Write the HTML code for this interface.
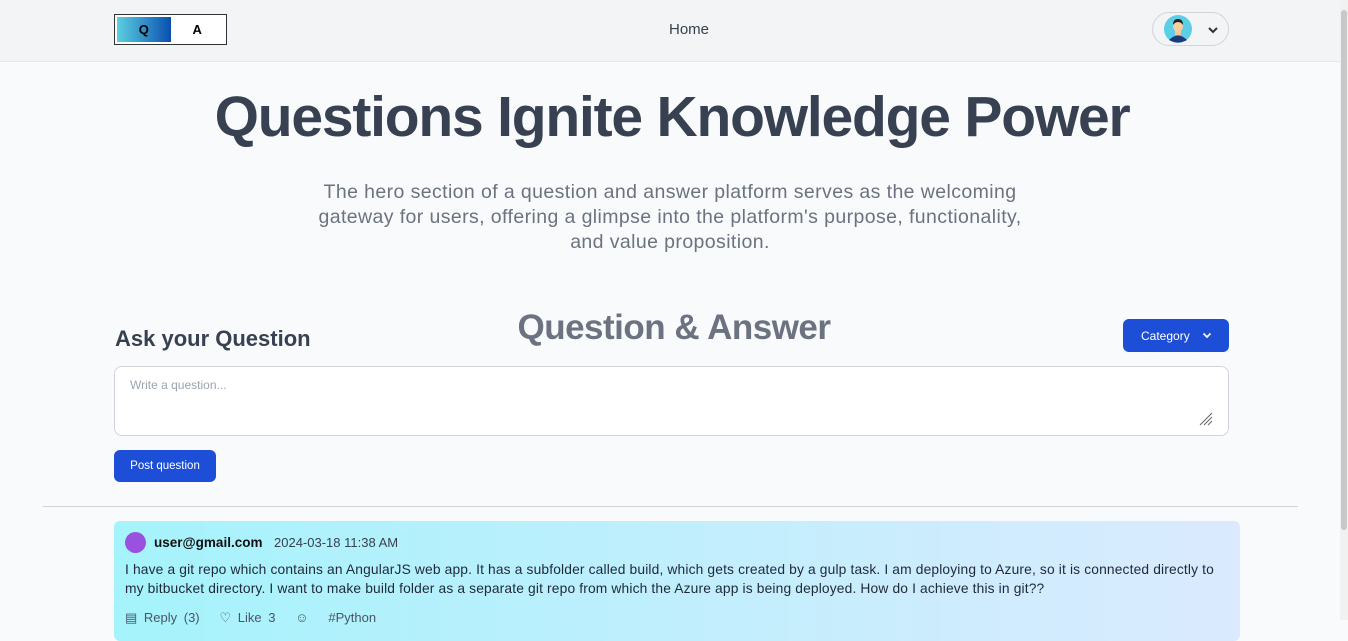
<!DOCTYPE html>
<html><head><meta charset="utf-8"><style>
*{box-sizing:border-box;margin:0;padding:0}
body{width:1348px;height:620px;overflow:hidden;background:#f9fafb;font-family:"Liberation Sans",sans-serif;color:#374151;position:relative}
.hdr{position:absolute;left:0;top:0;width:1340px;height:62px;background:#f3f4f6;border-bottom:1px solid #e5e7eb}
.logo{position:absolute;left:114px;top:14px;width:113px;height:31px;border:1.5px solid #333;background:#fff;display:flex;padding:2px}
.logo div{width:54px;height:100%;display:flex;align-items:center;justify-content:center;font-weight:bold;font-size:13px;color:#000}
.logo .q{background:linear-gradient(90deg,#5bd0e0,#0a4fb0)}
.home{position:absolute;left:669px;top:21px;font-size:15px;color:#374151}
.usr{position:absolute;left:1152px;top:12px;width:77px;height:34px;border:1px solid #d1d5db;border-radius:17px}
.sb{position:absolute;right:0;top:0;width:8px;height:620px;background:#f1f1f1}
.sb div{position:absolute;left:1px;top:10px;width:6px;height:520px;background:#c8c8c8;border-radius:3px}
h1{position:absolute;left:2px;width:1340px;top:84px;text-align:center;font-size:57px;font-weight:bold;letter-spacing:-1.2px;color:#374151}
.sub{position:absolute;left:305px;width:730px;top:180px;text-align:center;font-size:19.5px;letter-spacing:0.4px;line-height:25px;color:#6b7280}
.ask{position:absolute;left:115px;top:326px;font-size:22px;font-weight:bold;color:#374151}
.qa{position:absolute;left:0;width:1348px;top:308px;text-align:center;font-size:35px;font-weight:bold;color:#6b7280;letter-spacing:-0.5px}
.cat{position:absolute;left:1123px;top:319px;width:106px;height:33px;background:#1d4ed8;border-radius:6px;color:#fff;font-size:12px;display:flex;align-items:center;padding-left:18px}
.ta{position:absolute;left:114px;top:366px;width:1115px;height:70px;background:#fff;border:1px solid #d1d5db;border-radius:8px}
.ta span{position:absolute;left:15px;top:11px;font-size:12px;color:#9ca3af}
.post{position:absolute;left:114px;top:450px;width:102px;height:32px;background:#1d4ed8;border-radius:6px;color:#fff;font-size:11.5px;display:flex;align-items:center;justify-content:center}
.hr{position:absolute;left:43px;top:506px;width:1255px;height:1px;background:#d1d5db}
.card{position:absolute;left:114px;top:521px;width:1126px;height:120px;border-radius:6px;background:linear-gradient(90deg,#a5f3fc,#dbeafe)}
.av{position:absolute;left:11px;top:11px;width:21px;height:21px;border-radius:50%;background:#9b51e0}
.em{position:absolute;left:40px;top:14px;font-size:13.5px;font-weight:bold;color:#111}
.dt{position:absolute;left:160px;top:14px;font-size:13px;color:#374151}
.txt{position:absolute;left:11px;top:40px;width:1110px;font-size:13.8px;letter-spacing:0.15px;line-height:18.5px;color:#1f2937;white-space:nowrap}
.act{position:absolute;left:11px;top:89px;font-size:13px;color:#4b5563;word-spacing:3px}
</style></head><body>
<div class="hdr">
<div class="logo"><div class="q">Q</div><div>A</div></div>
<div class="home">Home</div>
<div class="usr">
<svg width="30" height="30" viewBox="0 0 30 30" style="position:absolute;left:10px;top:1px"><circle cx="15" cy="15" r="14" fill="#5ccfe6"/><path d="M6 26 Q15 17 24 26 Q15 31 6 26Z" fill="#1f3a7a"/><rect x="12" y="15" width="6" height="6" fill="#f2c79a"/><ellipse cx="15" cy="12" rx="5" ry="6" fill="#f5cfa0"/><path d="M10 11 Q10 5 15 5 Q20 5 20 11 Q18 8 15 8 Q12 8 10 11Z" fill="#222"/></svg>
<svg width="12" height="8" viewBox="0 0 12 8" style="position:absolute;left:54px;top:13px"><path d="M2 2 L6 6 L10 2" stroke="#333" stroke-width="2" fill="none"/></svg>
</div>
</div>
<div class="sb"><div></div></div>
<h1>Questions Ignite Knowledge Power</h1>
<div class="sub">The hero section of a question and answer platform serves as the welcoming gateway for users, offering a glimpse into the platform's purpose, functionality,<br>and value proposition.</div>
<div class="qa">Question &amp; Answer</div>
<div class="ask">Ask your Question</div>
<div class="cat">Category<svg width="10" height="7" viewBox="0 0 10 7" style="margin-left:12px"><path d="M1.5 1.5 L5 5 L8.5 1.5" stroke="#fff" stroke-width="1.8" fill="none"/></svg></div>
<div class="ta"><span>Write a question...</span><svg width="14" height="14" viewBox="0 0 14 14" style="position:absolute;right:15px;bottom:9px"><path d="M13 1L1 13M13 5L5 13M13 9L9 13" stroke="#666" stroke-width="1"/></svg></div>
<div class="post">Post question</div>
<div class="hr"></div>
<div class="card">
<div class="av"></div><div class="em">user@gmail.com</div><div class="dt">2024-03-18 11:38 AM</div>
<div class="txt">I have a git repo which contains an AngularJS web app. It has a subfolder called build, which gets created by a gulp task. I am deploying to Azure, so it is connected directly to<br>my bitbucket directory. I want to make build folder as a separate git repo from which the Azure app is being deployed. How do I achieve this in git??</div>
<div class="act">▤ Reply (3) &nbsp; ♡ Like 3 &nbsp; ☺ &nbsp; #Python</div>
</div>
</body></html>
